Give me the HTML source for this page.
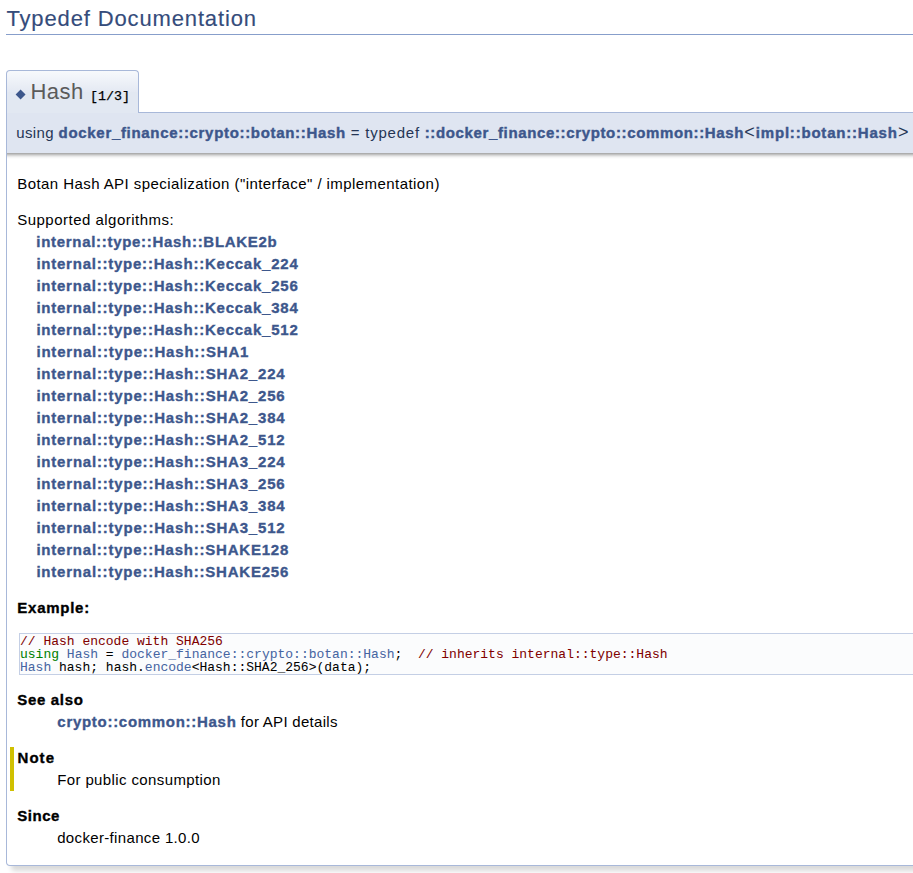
<!DOCTYPE html>
<html><head><meta charset="utf-8">
<style>
html,body{margin:0;padding:0;background:#fff;}
body{width:913px;height:873px;overflow:hidden;position:relative;}
body, table, div, p, dl { font-weight:400; font-size:15px; font-family:"Liberation Sans",sans-serif; line-height:22px; }
.contents{margin-left:6px;width:907px;}
h2.groupheader{border-bottom:1px solid #879ECB;color:#354C7B;font-size:22px;font-weight:normal;margin:0 0 17.43px 0;padding-top:8px;padding-bottom:4px;width:100%;line-height:22px;}
a{color:#3D578C;text-decoration:none;}
a.el{font-weight:bold;}
.memitem{padding:0;margin-bottom:10px;margin-right:5px;display:table;width:960px;}
h2.memtitle{padding:8px;border-top:1px solid #A8B8D9;border-left:1px solid #A8B8D9;border-right:1px solid #A8B8D9;border-top-right-radius:4px;border-top-left-radius:4px;margin:17.43px 0 -1px 0;background:linear-gradient(#F7F9FC,#E4E9F3 21px,#E2E8F2 21px);line-height:1.25;font-weight:300;float:left;font-size:21px;color:#5a5a5a;width:auto;}
.permalink{font-size:13.65px;display:inline-block;vertical-align:middle;}
.overload{-webkit-text-stroke:0.25px #000;color:#000;font-family:"Liberation Mono",monospace;font-size:13.35px;position:relative;top:1.5px;}
.memproto{border-top:1px solid #A8B8D9;border-left:1px solid #A8B8D9;border-right:1px solid #A8B8D9;padding:6px 0;color:#253555;font-weight:bold;background-color:#DFE5F1;box-shadow:5px 5px 5px rgba(0,0,0,0.15);border-top-right-radius:4px;}
.memdoc{border-bottom:1px solid #A8B8D9;border-left:1px solid #A8B8D9;border-right:1px solid #A8B8D9;padding:6px 10px 2px 10px;background:linear-gradient(#adadad 0 1px,#c2c2c2 1px 2px,#d8d8d8 2px 3px,#eaeaea 3px 4px,#f6f6f6 4px 5px,#fcfcfc 5px 6px,#fff 6px);border-bottom-left-radius:4px;border-bottom-right-radius:4px;box-shadow:5px 5px 5px rgba(0,0,0,0.15);}
table.memname{font-weight:400;margin-left:6px;border-spacing:2px;}
table.memname td{vertical-align:bottom;white-space:nowrap;padding:1px;}
p{margin:14px 0;}
div.fragment{padding:0 0 1px 0;margin:4px 8px 4px 2px;background:#FBFCFD;border:1px solid #C4CFE5;}
div.line{font-family:"Liberation Mono",monospace;font-size:13px;min-height:13px;line-height:13px;white-space:pre;margin:0;position:relative;top:1px;-webkit-text-stroke:0.04px currentColor;}
span.comment{color:#800000;}
span.keyword{color:#008000;}
a.code{color:#4665A2;}
dl{margin:14px 0;}
dl.section{margin-left:0;padding-left:0;}
dl.section dt{font-weight:bold;}
dl.section dd{margin-left:40px;margin-bottom:6px;}
dl.note{margin-left:-7px;padding-left:3px;border-left:4px solid #D0C000;}
.ind{display:inline-block;width:19px;}
a.el, b, dt {font-size:15px; -webkit-text-stroke:0.35px currentColor;}
.memproto a.el {font-size:15px;}
p, dd, td.memname {-webkit-text-stroke:0px currentColor;}
dd a.el {-webkit-text-stroke:0.35px currentColor;}
td.memname a.el {-webkit-text-stroke:0.42px currentColor;}
td.memname {-webkit-text-stroke:0px currentColor;}
h2.groupheader {-webkit-text-stroke:0.15px currentColor;}
.dia{display:inline-block;width:15.34px;height:14px;vertical-align:middle;position:relative;}
.dia i{position:absolute;left:1.5px;top:4.0px;width:7.2px;height:7.2px;background:#3D578C;transform:rotate(45deg);}
</style></head><body>
<div class="contents">
<h2 class="groupheader"><span style="letter-spacing:0.861px;margin-left:0.430px;margin-right:-0.430px">Typedef Documentation</span></h2>
<h2 class="memtitle"><span class="permalink"><span class="dia"><i></i></span></span><span style="letter-spacing:0.422px;margin-left:0.211px;margin-right:-0.211px;font-size:22px;line-height:20px">Hash </span><span class="overload">[1/3]</span></h2>
<div class="memitem"><div class="memproto">
<table class="memname"><tr><td class="memname"><span style="letter-spacing:0.375px;margin-left:0.188px;margin-right:-0.188px">using </span><a class="el" href="#"><span style="letter-spacing:0.683px;margin-left:0.342px;margin-right:-0.342px">docker_finance::crypto::botan::Hash</span></a><span style="letter-spacing:0.757px;margin-left:0.379px;margin-right:-0.379px"> = typedef </span><a class="el" href="#"><span style="letter-spacing:0.641px;margin-left:0.321px;margin-right:-0.321px">::docker_finance::crypto::common::Hash</span></a><span style="padding:0 0.609px;font-size:18px;line-height:0">&lt;</span><a class="el" href="#"><span style="letter-spacing:0.793px;margin-left:0.397px;margin-right:-0.397px">impl::botan::Hash</span></a><span style="padding:0 0.609px;font-size:18px;line-height:0">&gt;</span></td></tr></table>
</div><div class="memdoc">
<p><span style="letter-spacing:0.432px;margin-left:0.216px;margin-right:-0.216px">Botan Hash API specialization ("interface" / implementation)</span></p>
<p><span style="letter-spacing:0.482px;margin-left:0.241px;margin-right:-0.241px">Supported algorithms:</span><br>
<span class="ind"></span><a class="el" href="#"><span style="letter-spacing:0.697px;margin-left:0.349px;margin-right:-0.349px">internal::type::Hash::BLAKE2b</span></a><br>
<span class="ind"></span><a class="el" href="#"><span style="letter-spacing:0.767px;margin-left:0.384px;margin-right:-0.384px">internal::type::Hash::Keccak_224</span></a><br>
<span class="ind"></span><a class="el" href="#"><span style="letter-spacing:0.767px;margin-left:0.384px;margin-right:-0.384px">internal::type::Hash::Keccak_256</span></a><br>
<span class="ind"></span><a class="el" href="#"><span style="letter-spacing:0.767px;margin-left:0.384px;margin-right:-0.384px">internal::type::Hash::Keccak_384</span></a><br>
<span class="ind"></span><a class="el" href="#"><span style="letter-spacing:0.767px;margin-left:0.384px;margin-right:-0.384px">internal::type::Hash::Keccak_512</span></a><br>
<span class="ind"></span><a class="el" href="#"><span style="letter-spacing:0.814px;margin-left:0.407px;margin-right:-0.407px">internal::type::Hash::SHA1</span></a><br>
<span class="ind"></span><a class="el" href="#"><span style="letter-spacing:0.800px;margin-left:0.400px;margin-right:-0.400px">internal::type::Hash::SHA2_224</span></a><br>
<span class="ind"></span><a class="el" href="#"><span style="letter-spacing:0.800px;margin-left:0.400px;margin-right:-0.400px">internal::type::Hash::SHA2_256</span></a><br>
<span class="ind"></span><a class="el" href="#"><span style="letter-spacing:0.800px;margin-left:0.400px;margin-right:-0.400px">internal::type::Hash::SHA2_384</span></a><br>
<span class="ind"></span><a class="el" href="#"><span style="letter-spacing:0.800px;margin-left:0.400px;margin-right:-0.400px">internal::type::Hash::SHA2_512</span></a><br>
<span class="ind"></span><a class="el" href="#"><span style="letter-spacing:0.800px;margin-left:0.400px;margin-right:-0.400px">internal::type::Hash::SHA3_224</span></a><br>
<span class="ind"></span><a class="el" href="#"><span style="letter-spacing:0.800px;margin-left:0.400px;margin-right:-0.400px">internal::type::Hash::SHA3_256</span></a><br>
<span class="ind"></span><a class="el" href="#"><span style="letter-spacing:0.800px;margin-left:0.400px;margin-right:-0.400px">internal::type::Hash::SHA3_384</span></a><br>
<span class="ind"></span><a class="el" href="#"><span style="letter-spacing:0.800px;margin-left:0.400px;margin-right:-0.400px">internal::type::Hash::SHA3_512</span></a><br>
<span class="ind"></span><a class="el" href="#"><span style="letter-spacing:0.784px;margin-left:0.392px;margin-right:-0.392px">internal::type::Hash::SHAKE128</span></a><br>
<span class="ind"></span><a class="el" href="#"><span style="letter-spacing:0.784px;margin-left:0.392px;margin-right:-0.392px">internal::type::Hash::SHAKE256</span></a></p>
<p><b><span style="letter-spacing:0.730px;margin-left:0.365px;margin-right:-0.365px">Example:</span></b></p>
<div class="fragment"><div class="line"><span class="comment">// Hash encode with SHA256</span></div><div class="line"><span class="keyword">using</span> <a class="code" href="#">Hash</a> = <a class="code" href="#">docker_finance::crypto::botan::Hash</a>;  <span class="comment">// inherits internal::type::Hash</span></div><div class="line"><a class="code" href="#">Hash</a> hash; hash.<a class="code" href="#">encode</a>&lt;Hash::SHA2_256&gt;(data);</div></div>
<dl class="section see"><dt><span style="letter-spacing:0.660px;margin-left:0.330px;margin-right:-0.330px">See also</span></dt><dd><a class="el" href="#"><span style="letter-spacing:0.709px;margin-left:0.355px;margin-right:-0.355px">crypto::common::Hash</span></a><span style="letter-spacing:0.292px;margin-left:0.146px;margin-right:-0.146px"> for API details</span></dd></dl>
<dl class="section note"><dt><span style="letter-spacing:1.047px;margin-left:0.523px;margin-right:-0.523px">Note</span></dt><dd><span style="letter-spacing:0.385px;margin-left:0.192px;margin-right:-0.192px">For public consumption</span></dd></dl>
<dl class="section since"><dt><span style="letter-spacing:0.525px;margin-left:0.263px;margin-right:-0.263px">Since</span></dt><dd><span style="letter-spacing:0.345px;margin-left:0.172px;margin-right:-0.172px">docker-finance 1.0.0</span></dd></dl>
</div></div></div>
</body></html>
